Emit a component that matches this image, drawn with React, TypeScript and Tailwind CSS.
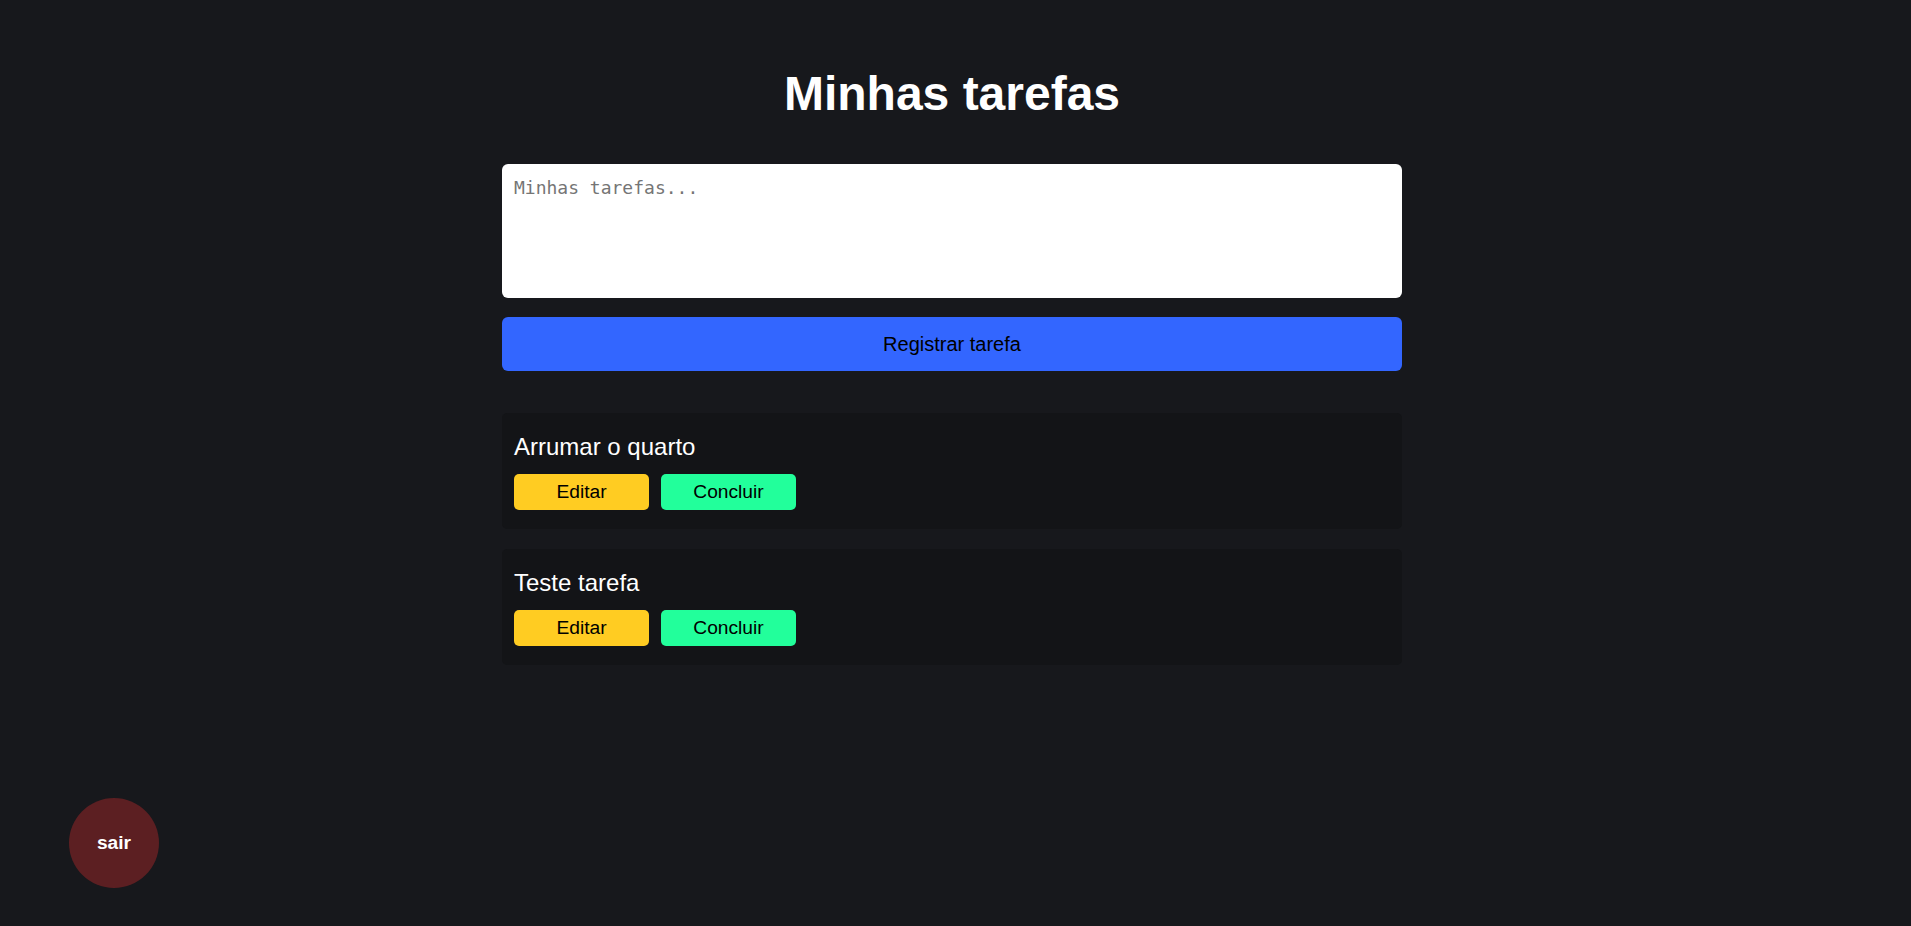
import { useState } from 'react';

interface Task {
  id: number;
  title: string;
}

const initialTasks: Task[] = [
  { id: 1, title: 'Arrumar o quarto' },
  { id: 2, title: 'Teste tarefa' },
];

function TaskItem({ task }: { task: Task }) {
  return (
    <article className="flex flex-col gap-[14px] rounded-[5px] bg-[#131417] px-[12px] pt-[20px] pb-[19px]">
      <p className="text-[24px] leading-[27px] text-white">{task.title}</p>
      <div className="flex gap-[12px]">
        <button className="flex h-[36px] w-[135px] items-center justify-center rounded-[5px] bg-[#ffcc22] text-[19.2px] text-black">
          Editar
        </button>
        <button className="flex h-[36px] w-[135px] items-center justify-center rounded-[5px] bg-[#22ff9b] text-[19.2px] text-black">
          Concluir
        </button>
      </div>
    </article>
  );
}

export default function App() {
  const [input, setInput] = useState('');
  const [tasks] = useState<Task[]>(initialTasks);

  return (
    <div className="min-h-screen w-full bg-[#17181c] font-['Liberation_Sans',Arial,sans-serif] pr-[7px]">
      <main className="mx-auto flex w-[900px] flex-col pt-[66px]">
        <h1 className="text-center text-[48px] font-bold leading-[55px] text-white">Minhas tarefas</h1>

        <form className="mt-[43px] flex flex-col gap-[19px]" onSubmit={(e) => e.preventDefault()}>
          <textarea
            value={input}
            onChange={(e) => setInput(e.target.value)}
            placeholder="Minhas tarefas..."
            className="h-[134px] w-full resize-none rounded-[6px] bg-white px-[12px] pt-[10px] font-['DejaVu_Sans_Mono',monospace] text-[18px] leading-[27px] text-black outline-none placeholder:text-[#757575]"
          />
          <button
            type="submit"
            className="flex h-[54px] w-full items-center justify-center rounded-[6px] bg-[#3366ff] text-[20px] text-black"
          >
            Registrar tarefa
          </button>
        </form>

        <section className="mt-[42px] flex flex-col gap-[20px]">
          {tasks.map((task) => (
            <TaskItem key={task.id} task={task} />
          ))}
        </section>
      </main>

      <button className="fixed bottom-[38px] left-[69px] flex h-[90px] w-[90px] items-center justify-center rounded-full bg-[#5c1f22] text-[19.2px] font-bold text-white">
        sair
      </button>
    </div>
  );
}
